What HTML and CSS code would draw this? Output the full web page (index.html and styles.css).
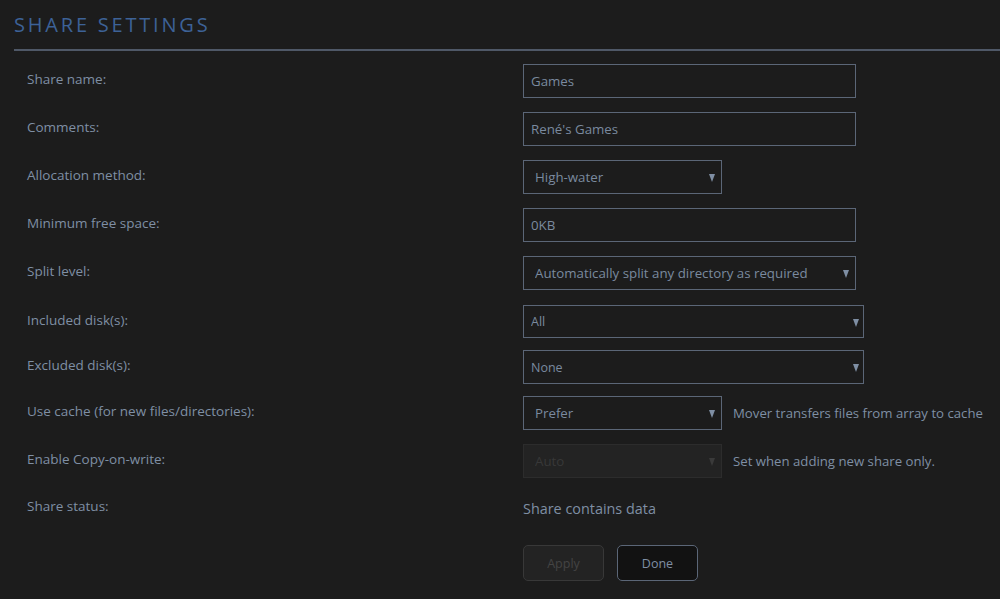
FILE: index.html
```html
<!DOCTYPE html>
<html lang="en">
<head>
  <meta charset="UTF-8">
  <meta name="viewport" content="width=device-width, initial-scale=1.0">
  <title>Share Settings</title>
  <link rel="stylesheet" href="styles.css">
</head>
<body>
  <div class="title">
    <h1>Share Settings</h1>
  </div>

  <form class="share-form">
    <div class="row">
      <label for="share-name">Share name:</label>
      <input type="text" id="share-name" class="wide" value="Games">
    </div>

    <div class="row">
      <label for="comments">Comments:</label>
      <input type="text" id="comments" class="wide" value="René's Games">
    </div>

    <div class="row">
      <label for="allocation">Allocation method:</label>
      <div class="select">
        <select id="allocation">
          <option>High-water</option>
          <option>Most-free</option>
          <option>Fill-up</option>
        </select>
      </div>
    </div>

    <div class="row">
      <label for="free-space">Minimum free space:</label>
      <input type="text" id="free-space" class="wide" value="0KB">
    </div>

    <div class="row loose">
      <label for="split-level">Split level:</label>
      <div class="select wide">
        <select id="split-level">
          <option>Automatically split any directory as required</option>
        </select>
      </div>
    </div>

    <div class="row tight">
      <label for="included">Included disk(s):</label>
      <div class="select disks short">
        <select id="included">
          <option>All</option>
        </select>
      </div>
    </div>

    <div class="row tight">
      <label for="excluded">Excluded disk(s):</label>
      <div class="select disks">
        <select id="excluded">
          <option>None</option>
        </select>
      </div>
    </div>

    <div class="row">
      <label for="use-cache">Use cache (for new files/directories):</label>
      <div class="select">
        <select id="use-cache">
          <option>Prefer</option>
          <option>Yes</option>
          <option>No</option>
          <option>Only</option>
        </select>
      </div>
      <span class="help">Mover transfers files from array to cache</span>
    </div>

    <div class="row">
      <label for="cow">Enable Copy-on-write:</label>
      <div class="select disabled">
        <select id="cow" disabled>
          <option>Auto</option>
        </select>
      </div>
      <span class="help">Set when adding new share only.</span>
    </div>

    <div class="row status">
      <label>Share status:</label>
      <span class="status-text">Share contains data</span>
    </div>

    <div class="actions">
      <button type="button" class="btn" disabled>Apply</button>
      <button type="button" class="btn">Done</button>
    </div>
  </form>
</body>
</html>
```

FILE: styles.css
```css
body {
  margin: 0;
  background-color: #1c1c1c;
  color: #7f8fa4;
  font-family: "Open Sans", "Noto Sans", sans-serif;
  font-size: 13px;
}

.title {
  margin-left: 14px;
  padding-top: 11px;
  border-bottom: 2px solid #4f5867;
}

h1 {
  margin: 0 0 10px 0;
  font-size: 20px;
  font-weight: normal;
  letter-spacing: 2.8px;
  text-transform: uppercase;
  color: #3d6297;
  line-height: 28px;
}

.share-form {
  padding: 13px 0 0 27px;
}

.row {
  display: flex;
  align-items: center;
  margin-bottom: 14px;
}

.row.loose {
  margin-bottom: 15px;
}

.row.tight {
  margin-bottom: 12px;
}

.row label {
  width: 496px;
  flex-shrink: 0;
  padding-bottom: 4px;
  font-size: 13.5px;
}

input[type="text"],
select {
  box-sizing: border-box;
  height: 34px;
  margin: 0;
  border: 1px solid #5b6677;
  border-radius: 0;
  background-color: #1c1c1c;
  color: #7a8a9f;
  font-family: inherit;
  font-size: 13.3px;
}

input[type="text"] {
  width: 333px;
  padding: 0 7px;
}

.select {
  position: relative;
  width: 199px;
}

.select.wide {
  width: 333px;
}

.select.disks {
  width: 341px;
}

select {
  width: 100%;
  padding: 0 24px 0 11px;
  appearance: none;
  -webkit-appearance: none;
}

.select.disks select {
  padding-left: 7px;
  font-size: 12.5px;
}

.select.short select {
  height: 33px;
}

.select::after {
  content: "";
  position: absolute;
  right: 7px;
  top: 50%;
  margin-top: -3px;
  border-left: 3.5px solid transparent;
  border-right: 3.5px solid transparent;
  border-top: 8px solid #7f8fa4;
  pointer-events: none;
}

.select.disks::after {
  right: 5px;
}

.select.disabled select {
  background-color: #262626;
  border-color: #333333;
  color: #444444;
}

.select.disabled::after {
  border-top-color: #3a3a3a;
}

.help {
  margin-left: 11px;
  font-size: 13.2px;
  color: #7f8fa4;
}

.row.status {
  height: 32px;
  margin-bottom: 21px;
}

.status-text {
  font-size: 14.4px;
  color: #7f8fa4;
}

.actions {
  display: flex;
  gap: 13px;
  margin-left: 496px;
}

.btn {
  width: 81px;
  height: 36px;
  border: 1px solid #5b6677;
  border-radius: 5px;
  background-color: #121212;
  color: #7f8fa4;
  font-family: inherit;
  font-size: 12.5px;
  cursor: pointer;
}

.btn:disabled {
  background-color: #232323;
  border-color: #383838;
  color: #444444;
  cursor: default;
}
```
